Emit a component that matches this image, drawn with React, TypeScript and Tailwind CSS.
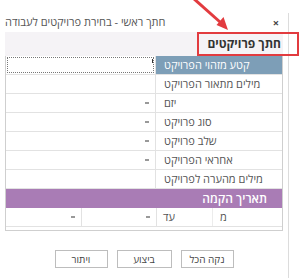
const font = { fontFamily: '"Open Sans", "Liberation Sans", "DejaVu Sans", sans-serif' };

function Caret() {
  return <div className="w-[4px] h-[2px] bg-[#999]" />;
}

interface RowProps {
  label: string;
  active?: boolean;
  dropdown?: boolean;
}

function FieldRow({ label, active, dropdown }: RowProps) {
  return (
    <div className="flex h-[19px] border-b border-[#e2e2e2]">
      <div className="flex-1 relative flex items-center justify-end pr-[6px] border-r border-[#e2e2e2]">
        {active && (
          <div className="absolute left-[1px] right-[1px] top-[1px] bottom-[1px] border border-dotted border-[#777]">
            <div className="absolute right-[0px] top-[1px] w-[1px] h-[4px] bg-[#333]" />
          </div>
        )}
        {dropdown && <Caret />}
      </div>
      <div
        className={
          active
            ? 'w-[126px] shrink-0 bg-[#7d9eb7] text-white pl-[8px] flex items-center justify-start'
            : 'w-[126px] shrink-0 text-[#555] pl-[8px] flex items-center justify-start'
        }
      >
        <span dir="rtl">{label}</span>
      </div>
    </div>
  );
}

export default function App() {
  return (
    <div className="relative w-[300px] h-[278px] bg-white overflow-hidden text-[11px]" style={font}>
      <div className="mt-[13px] w-[289px] h-[265px] border-r border-[#dcdcdc]">
        {/* title bar */}
        <div className="h-[19px] flex items-center justify-between pl-[5px] pr-[9px]">
          <span className="text-[11px] text-[#555]" dir="rtl">
            חתך ראשי - בחירת פרויקטים לעבודה
          </span>
          <span className="text-[11px] font-bold text-[#444] leading-none">×</span>
        </div>

        <div className="pl-[5px] pr-[5px]">
          {/* section header */}
          <div className="h-[24px] bg-[#f5f3f6] flex items-center justify-end pr-[2px]">
            <span className="text-[12px] font-bold text-[#333]" dir="rtl">
              חתך פרויקטים
            </span>
          </div>

          {/* fields table */}
          <div className="border border-[#cfcfcf] border-t-0 pb-[3px]">
            <FieldRow label="קטע מזהוי הפרויקט" active />
            <FieldRow label="מילים מתאור הפרויקט" />
            <FieldRow label="יזם" dropdown />
            <FieldRow label="סוג פרויקט" dropdown />
            <FieldRow label="שלב פרויקט" dropdown />
            <FieldRow label="אחראי הפרויקט" dropdown />
            <FieldRow label="מילים מהערה לפרויקט" />

            <div className="h-[19px] bg-[#a97cb5] flex items-center justify-end pr-[15px]">
              <span className="text-[12px] text-white font-semibold" dir="rtl">
                תאריך הקמה
              </span>
            </div>

            <div className="flex h-[19px] border-b border-[#e2e2e2] text-[#555]">
              <div className="w-[76px] shrink-0 flex items-center justify-end pr-[6px] border-r border-[#e2e2e2]">
                <Caret />
              </div>
              <div className="w-[75px] shrink-0 flex items-center justify-end pr-[6px] border-r border-[#e2e2e2]">
                <Caret />
              </div>
              <div className="w-[56px] shrink-0 flex items-center pl-[6px] border-r border-[#ececec]">
                <span dir="rtl">עד</span>
              </div>
              <div className="flex-1 flex items-center pl-[7px]">
                <span dir="rtl">מ</span>
              </div>
            </div>
          </div>

          {/* buttons */}
          <div className="flex justify-center gap-[9px] mt-[19px]" dir="rtl">
            <button className="w-[53px] h-[18px] border border-[#bdbdbd] bg-white text-[10px] text-[#444] leading-none">
              נקה הכל
            </button>
            <button className="w-[55px] h-[18px] border border-[#bdbdbd] bg-white text-[10px] text-[#444] leading-none">
              ביצוע
            </button>
            <button className="w-[53px] h-[18px] border border-[#bdbdbd] bg-white text-[10px] text-[#444] leading-none">
              ויתור
            </button>
          </div>
        </div>
      </div>

      {/* annotation: red box and arrow */}
      <div className="absolute left-[197px] top-[32px] w-[102px] h-[24px] border-2 border-[#e23b3f]" />
      <svg className="absolute left-[186px] top-0" width="46" height="34" viewBox="0 0 46 34">
        <line x1="7" y1="-2" x2="34" y2="22" stroke="#e23b3f" strokeWidth="3" />
        <polygon points="37.5,17 30.5,25 42,30" fill="#e23b3f" />
      </svg>
    </div>
  );
}
